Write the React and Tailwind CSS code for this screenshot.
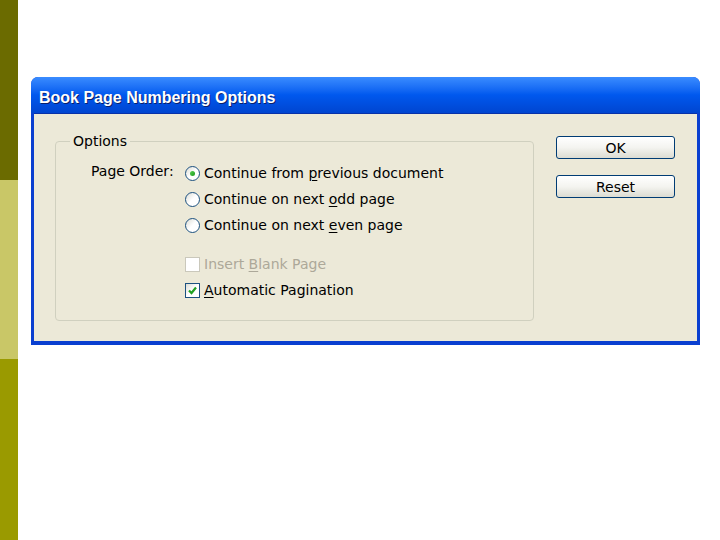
import React from "react";

const FONT = { fontFamily: '"DejaVu Sans", Verdana, sans-serif' };

// label with one underlined mnemonic letter
const Mnemonic = ({ before, letter, after }) => (
  <span>
    {before}
    <span className="underline underline-offset-2">{letter}</span>
    {after}
  </span>
);

const Radio = ({ checked }) => (
  <span className="relative flex h-[15px] w-[15px] shrink-0 items-center justify-center rounded-full border border-[#1c5180] bg-gradient-to-br from-[#dcdcd4] via-white to-white">
    {checked && (
      <span className="h-[5px] w-[5px] rounded-full bg-gradient-to-br from-[#55d051] to-[#1a9a1a]" />
    )}
  </span>
);

const Checkbox = ({ checked, disabled }) => (
  <span
    className={
      disabled
        ? "flex h-[15px] w-[15px] shrink-0 items-center justify-center border border-[#cac8bb] bg-white"
        : "flex h-[15px] w-[15px] shrink-0 items-center justify-center border border-[#1c5180] bg-gradient-to-br from-[#dcdcd4] via-white to-white"
    }
  >
    {checked && (
      <svg width="11" height="11" viewBox="0 0 11 11">
        <path d="M2 5.5 L4.5 8 L9 2.5" fill="none" stroke="#21a121" strokeWidth="2.2" />
      </svg>
    )}
  </span>
);

const RADIOS = [
  { before: "Continue from ", letter: "p", after: "revious document", checked: true },
  { before: "Continue on next ", letter: "o", after: "dd page" },
  { before: "Continue on next ", letter: "e", after: "ven page" },
];

const XpButton = ({ children }) => (
  <button className="h-[23px] w-[119px] rounded-[3px] border border-[#003c74] bg-gradient-to-b from-white via-[#f4f4f0] to-[#dcdcd2] text-[14px] leading-none text-black">
    {children}
  </button>
);

export default function App() {
  return (
    <div className="flex h-[540px] w-[720px] bg-white" style={FONT}>
      <div className="flex w-[18px] flex-col">
        <div className="h-[180px] bg-[#6b6b00]" />
        <div className="h-[179px] bg-[#c9c767]" />
        <div className="flex-1 bg-[#9a9a00]" />
      </div>

      <div className="pl-[13px] pt-[77px]">
        <div className="w-[669px] overflow-hidden rounded-t-[7px] bg-[#0a3fd0]">
          <div className="flex h-[36px] items-center bg-gradient-to-b from-[#3a8cff] via-[#0058ee] to-[#0045d0] pl-[8px] pt-[6px]">
            <span
              className="text-[16px] font-bold text-white [text-shadow:1px_1px_0_#0a1f6b]"
              style={{ fontFamily: '"Liberation Sans", Arial, sans-serif' }}
            >
              Book Page Numbering Options
            </span>
          </div>

          <div className="mx-[3px] mb-[4px] flex h-[228px] bg-[#ece9d8] border-t border-[#0831a8]">
            <div className="pl-[21px] pt-[19px]">
              <fieldset className="h-[188px] w-[479px] rounded-[4px] border border-[#d0d0bf] pl-[35px] pr-[10px]">
                <legend className="ml-[-21px] px-[3px] text-[14px] leading-[16px] text-black">
                  Options
                </legend>
                <div className="mt-[11px] flex text-[14px] text-black">
                  <div className="w-[94px] pt-[1px]">Page Order:</div>
                  <div className="flex flex-col">
                    {RADIOS.map((r) => (
                      <div key={r.after} className="flex h-[26px] items-center gap-[4px]">
                        <Radio checked={r.checked} />
                        <Mnemonic before={r.before} letter={r.letter} after={r.after} />
                      </div>
                    ))}
                    <div className="mt-[13px] flex h-[26px] items-center gap-[4px] text-[#aca899]">
                      <Checkbox disabled />
                      <Mnemonic before="Insert " letter="B" after="lank Page" />
                    </div>
                    <div className="flex h-[26px] items-center gap-[4px]">
                      <Checkbox checked />
                      <Mnemonic before="" letter="A" after="utomatic Pagination" />
                    </div>
                  </div>
                </div>
              </fieldset>
            </div>

            <div className="ml-[22px] flex flex-col gap-[16px] pt-[22px]">
              <XpButton>OK</XpButton>
              <XpButton>Reset</XpButton>
            </div>
          </div>
        </div>
      </div>
    </div>
  );
}
